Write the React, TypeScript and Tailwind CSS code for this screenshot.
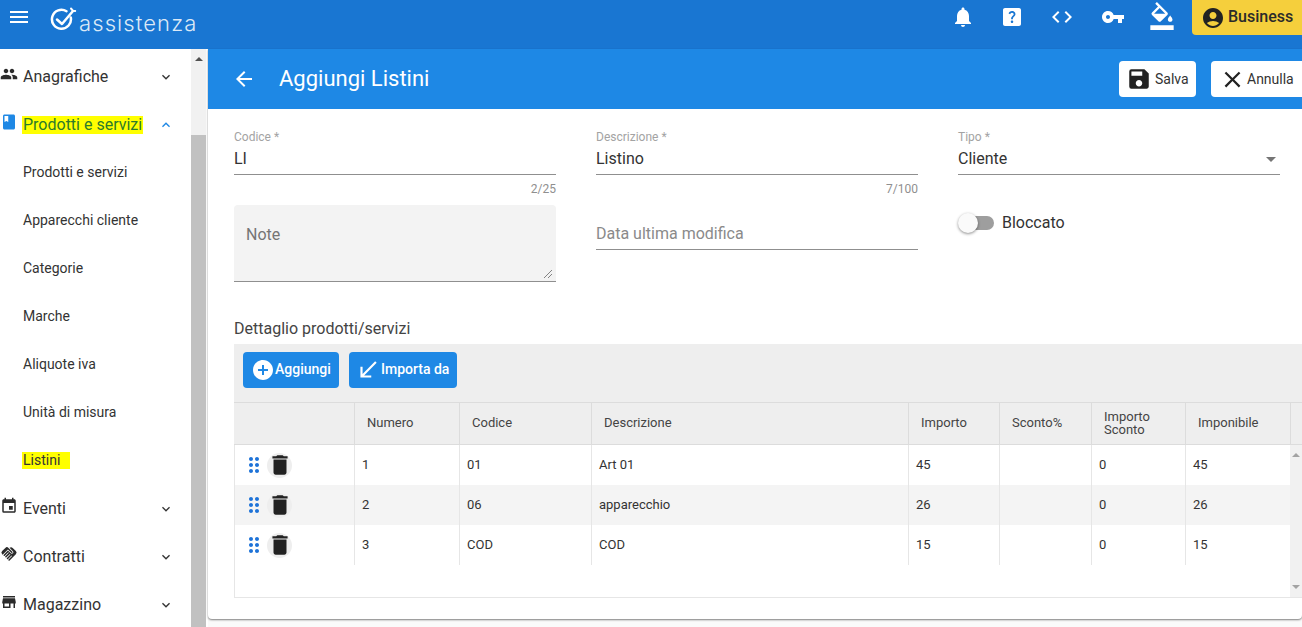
import React from "react";
import {
  MdMenu, MdPeople, MdBook, MdEvent, MdHandshake, MdStore, MdExpandMore, MdExpandLess,
  MdNotifications, MdHelpCenter, MdCode, MdVpnKey, MdFormatColorFill, MdAccountCircle,
  MdSave, MdClose, MdArrowBack, MdAddCircle, MdCallReceived, MdDragIndicator, MdDelete,
} from "react-icons/md";

const font = { fontFamily: "Roboto, 'Liberation Sans', sans-serif" };

function Main({ icon, label, open, mark }: { icon: React.ReactNode; label: string; open?: boolean; mark?: boolean }) {
  return (
    <div className="h-12 flex items-center pt-[2px] pr-[17px] shrink-0">
      <div className={`w-[23px] text-[18px] -mt-[6px] ${open ? "text-[#1e88e5]" : "text-[#2b2b2b]"}`}>{icon}</div>
      <span className={`text-[16px] leading-[18px] flex-1 ${mark ? "text-[#2c7a2c]" : "text-[#333]"}`}>
        <span className={mark ? "bg-[#ffff00] inline-block -ml-px pl-px pr-px" : ""}>{label}</span>
      </span>
      {open ? <MdExpandLess className="text-[#1e88e5] text-[16px]" /> : <MdExpandMore className="text-[#333] text-[16px]" />}
    </div>
  );
}

function Sub({ label, mark }: { label: string; mark?: boolean }) {
  return (
    <div className="h-12 flex items-center pl-[23px] text-[14px] text-[#333] shrink-0">
      <span className={mark ? "bg-[#ffff00] -ml-px pl-px pr-[10px] leading-[17px]" : ""}>{label}</span>
    </div>
  );
}

function Sidebar() {
  return (
    <aside className="w-[208px] shrink-0 flex bg-white overflow-hidden">
      <div className="w-[191px] pt-[3px] flex flex-col">
        <Main icon={<MdPeople />} label="Anagrafiche" />
        <Main icon={<MdBook />} label="Prodotti e servizi" open mark />
        <Sub label="Prodotti e servizi" />
        <Sub label="Apparecchi cliente" />
        <Sub label="Categorie" />
        <Sub label="Marche" />
        <Sub label="Aliquote iva" />
        <Sub label="Unità di misura" />
        <Sub label="Listini" mark />
        <Main icon={<MdEvent />} label="Eventi" />
        <Main icon={<MdHandshake />} label="Contratti" />
        <Main icon={<MdStore />} label="Magazzino" />
      </div>
      <div className="w-[15px] bg-[#f1f1f1] flex flex-col items-center">
        <div className="h-[86px] w-full flex justify-center pt-[8px]">
          <div className="w-0 h-0 border-x-[4px] border-x-transparent border-b-[4px] border-b-[#505050]" />
        </div>
        <div className="flex-1 w-full bg-[#c1c1c1]" />
      </div>
    </aside>
  );
}

function Field({ label, value, counter }: { label: string; value: string; counter: string }) {
  return (
    <div>
      <div className="text-[12px] leading-[14px] text-[#a3a3a3] mt-[21px]">{label}</div>
      <div className="text-[16px] leading-[20px] text-[#333] mt-[3px] border-b border-[#8f8f8f] pt-[2px] box-content h-[25px]">{value}</div>
      <div className="text-[12px] leading-[14px] text-[#8f8f8f] text-right mt-[7px]">{counter}</div>
    </div>
  );
}

const bodyCols = "grid grid-cols-[120px_105px_132px_317px_91px_92px_94px_105px]";
const headCols = "grid grid-cols-[121px_105px_132px_317px_91px_92px_94px_105px]";

function Header() {
  const hs: React.ReactNode[] = ["", "Numero", "Codice", "Descrizione", "Importo", "Sconto%", <>Importo<br />Sconto</>, "Imponibile"];
  return (
    <div className={`${headCols} h-[43px] bg-[#eeeeee] border-y border-[#dcdcdc] text-[13px] leading-[13px] text-[#444]`}>
      {hs.map((h, i) => (
        <div key={i} className="border-r border-[#dcdcdc] flex items-center pl-3 pb-[2px]">{h}</div>
      ))}
    </div>
  );
}

function Row({ cells, alt }: { cells: string[]; alt?: boolean }) {
  return (
    <div className={`${bodyCols} h-10 text-[13px] text-[#333] ${alt ? "bg-[#f4f4f4]" : "bg-white"}`}>
      <div className="border-r border-[#e6e6e6] flex items-center pl-[7px]">
        <MdDragIndicator className="text-[#1e73d8] text-[24px] mr-[1px] shrink-0" />
        <span className="w-[25px] h-[25px] rounded-full bg-[#eeeeee] flex items-center justify-center">
          <MdDelete className="text-[#222] text-[26px] shrink-0" />
        </span>
      </div>
      {cells.map((c, i) => (
        <div key={i} className={`flex items-center pl-[7px] ${i === 6 ? "" : "border-r border-[#e6e6e6]"}`}>{c}</div>
      ))}
    </div>
  );
}

export default function App() {
  return (
    <div className="h-[627px] w-[1302px] overflow-hidden flex flex-col bg-white" style={font}>
      <header className="h-[49px] bg-[#1976d2] flex shrink-0 text-white">
        <div className="flex items-start flex-1">
          <MdMenu className="text-[24px] ml-[7px] mt-[5px]" />
          <svg width="30" height="30" viewBox="0 0 30 30" className="ml-[19px] mt-[5px]" fill="none" stroke="white" strokeWidth="2.5" strokeLinecap="round" strokeLinejoin="round">
            <path d="M16.5 6.2A9.5 9.5 0 1 0 20.8 12.5" />
            <path d="M7 14.5l5 4.5L23 6" />
            <path d="M21 3.5l1.8 2.2 2.4 .2" strokeWidth="2" />
          </svg>
          <span className="text-[22px] leading-[26px] mt-[10px] -ml-[1px] font-light tracking-[1.1px] text-[#dbe9f7]" style={{ fontFamily: "Inter, sans-serif" }}>assistenza</span>
        </div>
        <div className="flex items-start">
          <MdNotifications className="text-[24px] mt-[5px] mr-[25px]" />
          <MdHelpCenter className="text-[24px] mt-[5px] mr-[26px]" />
          <MdCode className="text-[24px] mt-[5px] mr-[27px]" />
          <MdVpnKey className="text-[24px] mt-[5px] mr-[23px]" />
          <MdFormatColorFill className="text-[28px] mt-[2px] mr-[16px]" />
          <div className="w-[110px] h-[35px] bg-[#f5cf3c] rounded-bl-[4px] flex items-center pl-[9px] gap-[3px] text-[#2a2a2a] font-medium text-[16px]">
            <MdAccountCircle className="text-[24px] text-[#222]" />
            <span className="-mt-[2px]">Business</span>
          </div>
        </div>
      </header>
      <div className="flex flex-1 min-h-0">
        <Sidebar />
        <main className="flex-1 min-w-0 bg-[#fafafa] flex flex-col">
          <div className="bg-white rounded-b-[4px] shadow-[0_1px_2px_rgba(0,0,0,0.5)] h-[570px] flex flex-col">
            <div className="h-[60px] bg-[#1e88e5] flex items-center text-white shrink-0">
              <MdArrowBack className="text-[24px] ml-[24px]" />
              <h1 className="text-[22px] ml-[23px] -mt-[2px] flex-1 font-normal">Aggiungi Listini</h1>
              <button className="h-9 w-[77px] bg-white rounded-[4px] text-[#333] text-[14px] flex items-center pl-[7px] gap-[3px]">
                <MdSave className="text-[26px] text-[#222]" />Salva
              </button>
              <button className="h-9 w-[91px] ml-[15px] bg-white rounded-l-[4px] text-[#333] text-[14px] flex items-center pl-[8px] gap-[1px]">
                <MdClose className="text-[27px] text-[#222]" />Annulla
              </button>
            </div>
            <div className="pl-[26px] grid grid-cols-[322px_322px_322px] gap-x-10 shrink-0">
              <Field label="Codice *" value="LI" counter="2/25" />
              <Field label="Descrizione *" value="Listino" counter="7/100" />
              <div>
                <div className="text-[12px] leading-[14px] text-[#a3a3a3] mt-[21px]">Tipo *</div>
                <div className="text-[16px] leading-[20px] text-[#333] mt-[3px] border-b border-[#8f8f8f] pt-[2px] h-[25px] flex justify-between box-content">
                  Cliente
                  <span className="w-0 h-0 mt-[8px] mr-[4px] border-x-[5px] border-x-transparent border-t-[5px] border-t-[#757575]" />
                </div>
              </div>
              <div className="mt-[9px] h-[77px] bg-[#f3f3f3] rounded-t-[4px] border-b border-[#8f8f8f] relative pl-3 pt-[20px] text-[16px] leading-[20px] text-[#757575]">
                Note
                <svg width="10" height="10" viewBox="0 0 10 10" className="absolute right-[2px] bottom-[2px] mr-[1px]" stroke="#666" strokeWidth="0.8">
                  <path d="M1 9L9 1M5 9L9 5" />
                </svg>
              </div>
              <div className="mt-[9px]">
                <div className="h-[45px] border-b border-[#8f8f8f] pt-[19px] text-[16px] leading-[20px] text-[#8a8a8a]">Data ultima modifica</div>
              </div>
              <div className="mt-[9px] flex items-start pt-[8px] text-[16px] leading-[20px] text-[#333]">
                <div className="relative w-9 h-5 mr-2 shrink-0 flex items-center justify-end">
                  <div className="w-[28px] h-[14px] rounded-full bg-[#9e9e9e]" />
                  <div className="absolute left-0 top-0 w-5 h-5 rounded-full bg-[#fafafa] shadow-[0_1px_3px_rgba(0,0,0,0.45)]" />
                </div>
                Bloccato
              </div>
            </div>
            <div className="ml-[26px] mt-[37px] text-[16px] leading-[20px] text-[#444] shrink-0">Dettaglio prodotti/servizi</div>
            <div className="ml-[26px] mt-[5px] flex-1 flex flex-col min-h-0">
              <div className="h-[58px] bg-[#eeeeee] flex items-center pl-[9px] gap-[10px] shrink-0 pb-[7px]">
                <button className="h-9 w-[96px] bg-[#1e88e5] rounded-[4px] text-white text-[14px] font-medium flex items-center pl-[9px]">
                  <MdAddCircle className="text-[24px] -ml-[1px]" />Aggiungi
                </button>
                <button className="h-9 w-[108px] bg-[#1e88e5] rounded-[4px] text-white text-[14px] font-medium flex items-center pl-[6px]">
                  <MdCallReceived className="text-[26px]" />Importa da
                </button>
              </div>
              <Header />
              <div className="h-[153px] border-l border-b border-[#e6e6e6] flex shrink-0">
                <div className="flex-1 min-w-0 overflow-hidden">
                  <Row cells={["1", "01", "Art 01", "45", "", "0", "45"]} />
                  <Row alt cells={["2", "06", "apparecchio", "26", "", "0", "26"]} />
                  <Row cells={["3", "COD", "COD", "15", "", "0", "15"]} />
                </div>
                <div className="w-[12px] bg-[#f1f1f1] flex flex-col justify-between items-center py-[8px] shrink-0">
                  <div className="w-0 h-0 border-x-[4px] border-x-transparent border-b-[4px] border-b-[#a3a3a3]" />
                  <div className="w-0 h-0 border-x-[4px] border-x-transparent border-t-[4px] border-t-[#a3a3a3]" />
                </div>
              </div>
            </div>
          </div>
        </main>
      </div>
    </div>
  );
}
